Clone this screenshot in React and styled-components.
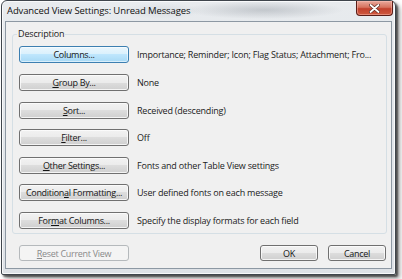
import React from 'react';
import styled, { createGlobalStyle } from 'styled-components';

const Global = createGlobalStyle`
  html, body { margin: 0; padding: 0; background: #ffffff; }
  body { font-family: "Open Sans", "Noto Sans", sans-serif; color: #1b1b1b; }
  * { box-sizing: border-box; }
`;

const Page = styled.div`
  width: 402px;
  height: 279px;
  padding-left: 1px;
  overflow: hidden;
`;

const Window = styled.div`
  width: 395px;
  height: 275px;
  border: 1px solid #3f454c;
  border-radius: 6px 6px 2px 2px;
  background:
    radial-gradient(ellipse 80px 9px at 262px 9px, rgba(110,118,128,0.30), rgba(110,118,128,0) 100%),
    radial-gradient(ellipse 40px 8px at 160px 10px, rgba(150,158,168,0.18), rgba(150,158,168,0) 100%),
    linear-gradient(to bottom, #e8ebee 0%, #e2e6ea 40%, #dde1e6 100%);
  box-shadow: 2px 2px 2px rgba(0,0,0,0.55), 4px 4px 5px rgba(0,0,0,0.35), inset 0 0 0 1px rgba(255,255,255,0.75);
  display: flex;
  flex-direction: column;
  padding: 0 3px 5px;
`;

const TitleBar = styled.div`
  height: 20px;
  display: flex;
  justify-content: space-between;
  align-items: flex-start;
  padding-left: 2px;
`;

const Title = styled.div`
  font-size: 9.5px;
  line-height: 20px;
  color: #111;
  letter-spacing: -0.12px;
  white-space: nowrap;
`;

const CloseButton = styled.div`
  width: 37px;
  height: 15px;
  margin-right: -1px;
  border: 1px solid #5a1d17;
  border-top: none;
  border-radius: 0 0 4px 4px;
  background: linear-gradient(to bottom, #e9a99c 0%, #d6735f 45%, #c2412d 55%, #cf5a3f 100%);
  box-shadow: inset 0 0 0 1px rgba(255,200,190,0.45);
  display: flex;
  align-items: center;
  justify-content: center;
`;

const Client = styled.div`
  flex: 1;
  border: 1px solid #8d98a3;
  background: #f0f0f0;
  display: flex;
  flex-direction: column;
  padding-top: 6px;
`;

const Group = styled.fieldset`
  margin: 0 4px 0 6px;
  border: 1px solid #d5dfe5;
  border-radius: 3px;
  padding: 6.4px 6px 4px 6px;
  min-width: 0;
`;

const Legend = styled.legend`
  font-size: 9px;
  line-height: 12px;
  padding: 0 1px;
  margin-left: -2px;
  letter-spacing: -0.15px;
  color: #1b1b1b;
`;

const Rows = styled.div`
  display: grid;
  grid-auto-rows: 17px;
  row-gap: 10.6px;
`;

const Row = styled.div`
  display: flex;
  align-items: center;
  gap: 8px;
`;

const Button = styled.div`
  width: ${p => p.$w || 110}px;
  height: ${p => p.$h || 17}px;
  flex: none;
  border: 1px solid ${p => (p.$disabled ? '#b5b9bc' : p.$focused ? '#3c7fb1' : '#707070')};
  border-radius: 3px;
  background: ${p =>
    p.$disabled
      ? '#f4f4f4'
      : p.$focused
      ? 'linear-gradient(to bottom, #eaf6fd 0%, #d9f0fc 50%, #bee6fd 50%, #a7d9f5 100%)'
      : 'linear-gradient(to bottom, #f2f2f2 0%, #ebebeb 50%, #dddddd 50%, #cfcfcf 100%)'};
  box-shadow: inset 0 0 0 1px ${p => (p.$disabled ? 'rgba(255,255,255,0)' : p.$focused ? 'rgba(255,255,255,0.55)' : 'rgba(252,252,252,0.8)')};
  color: ${p => (p.$disabled ? '#8a8a8a' : '#151515')};
  font-size: 9px;
  letter-spacing: -0.3px;
  line-height: 1;
  display: flex;
  align-items: center;
  justify-content: center;
  white-space: nowrap;
`;

const Info = styled.div`
  font-size: 9px;
  letter-spacing: -0.2px;
  color: #1b1b1b;
  white-space: nowrap;
`;

const Footer = styled.div`
  display: flex;
  align-items: center;
  padding: 11.4px 5px 0 13px;
`;

const Spacer = styled.div`
  flex: 1;
`;

const FooterButtons = styled.div`
  display: flex;
  gap: 10px;
`;

const U = styled.span`
  text-decoration: underline;
  text-underline-offset: 1px;
`;

const CloseIcon = () => (
  <svg width="11" height="9" viewBox="0 0 11 9">
    <path d="M1.5 1 L9.5 8 M9.5 1 L1.5 8" stroke="#5a2a22" strokeWidth="3.2" strokeLinecap="round" />
    <path d="M1.5 1 L9.5 8 M9.5 1 L1.5 8" stroke="#ffffff" strokeWidth="1.8" strokeLinecap="round" />
  </svg>
);

const rows = [
  { label: <>Columns...</>, info: 'Importance; Reminder; Icon; Flag Status; Attachment; Fro...', focused: true },
  { label: <><U>G</U>roup By...</>, info: 'None' },
  { label: <><U>S</U>ort...</>, info: 'Received (descending)' },
  { label: <><U>F</U>ilter...</>, info: 'Off' },
  { label: <><U>O</U>ther Settings...</>, info: 'Fonts and other Table View settings' },
  { label: <>Condition<U>a</U>l Formatting...</>, info: 'User defined fonts on each message' },
  { label: <>For<U>m</U>at Columns...</>, info: 'Specify the display formats for each field' },
];

export default function App() {
  return (
    <>
      <Global />
      <Page>
        <Window>
          <TitleBar>
            <Title>Advanced View Settings: Unread Messages</Title>
            <CloseButton>
              <CloseIcon />
            </CloseButton>
          </TitleBar>
          <Client>
            <Group>
              <Legend>Description</Legend>
              <Rows>
                {rows.map((r, i) => (
                  <Row key={i}>
                    <Button $focused={r.focused}>{r.label}</Button>
                    <Info>{r.info}</Info>
                  </Row>
                ))}
              </Rows>
            </Group>
            <Footer>
              <Button $disabled $h={16}>
                <U>R</U>eset Current View
              </Button>
              <Spacer />
              <FooterButtons>
                <Button $w={58} $h={16}>OK</Button>
                <Button $w={58} $h={16}>Cancel</Button>
              </FooterButtons>
            </Footer>
          </Client>
        </Window>
      </Page>
    </>
  );
}
